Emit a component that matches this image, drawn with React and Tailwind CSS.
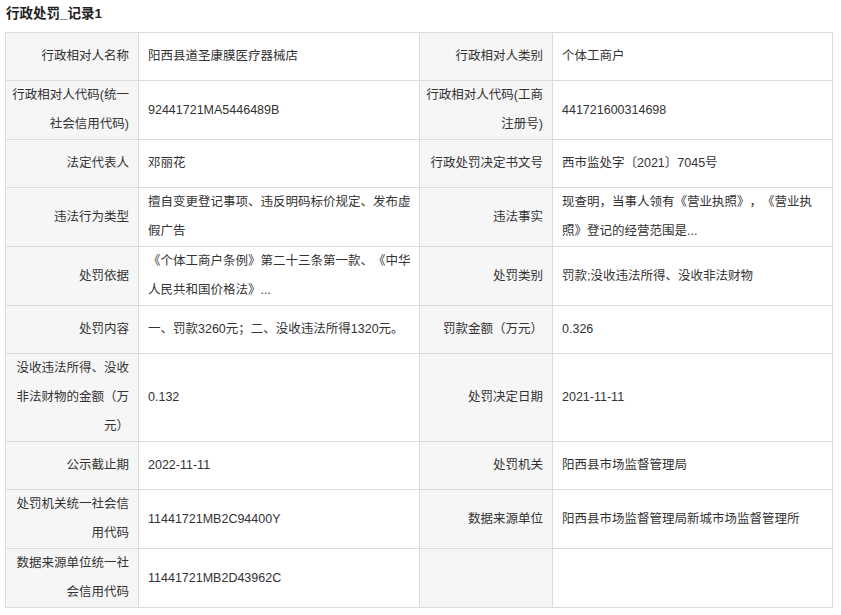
import React from "react";

const rows = [
  [["行政相对人名称"], ["阳西县道圣康膜医疗器械店"], ["行政相对人类别"], ["个体工商户"]],
  [["行政相对人代码(统一", "社会信用代码)"], ["92441721MA5446489B"], ["行政相对人代码(工商", "注册号)"], ["441721600314698"]],
  [["法定代表人"], ["邓丽花"], ["行政处罚决定书文号"], ["西市监处字〔2021〕7045号"]],
  [["违法行为类型"], ["擅自变更登记事项、违反明码标价规定、发布虚", "假广告"], ["违法事实"], ["现查明，当事人领有《营业执照》，《营业执", "照》登记的经营范围是..."]],
  [["处罚依据"], ["《个体工商户条例》第二十三条第一款、《中华", "人民共和国价格法》..."], ["处罚类别"], ["罚款;没收违法所得、没收非法财物"]],
  [["处罚内容"], ["一、罚款3260元；二、没收违法所得1320元。"], ["罚款金额（万元）"], ["0.326"]],
  [["没收违法所得、没收", "非法财物的金额（万", "元）"], ["0.132"], ["处罚决定日期"], ["2021-11-11"]],
  [["公示截止期"], ["2022-11-11"], ["处罚机关"], ["阳西县市场监督管理局"]],
  [["处罚机关统一社会信", "用代码"], ["11441721MB2C94400Y"], ["数据来源单位"], ["阳西县市场监督管理局新城市场监督管理所"]],
  [["数据来源单位统一社", "会信用代码"], ["11441721MB2D43962C"], [], []],
];

function Lines({ lines }) {
  return (
    <div className="whitespace-nowrap">
      {lines.map((l, i) => (
        <div key={i}>{l}</div>
      ))}
    </div>
  );
}

export default function App() {
  return (
    <div className="bg-white w-[841px] min-h-[615px] text-[#333] font-['Liberation_Sans','Noto_Sans_CJK_SC',sans-serif] [text-spacing-trim:space-all]">
      <div className="h-[32px] pl-[6px] pt-[4px] text-[13.5px] leading-[20px] font-bold text-[#222]">
        行政处罚_记录1
      </div>
      <div className="ml-[5px] w-[828px] grid grid-cols-[133px_281px_133px_280px] border-l border-t border-[#dcdcdc] text-[12.5px] leading-[29px]">
        {rows.map((row, ri) =>
          row.map((cell, ci) =>
            ci % 2 === 0 ? (
              <div
                key={ri + "-" + ci}
                className="min-h-[48px] flex items-center justify-end text-right bg-[#f6f6f6] border-r border-b border-[#dcdcdc] pl-[4px] pr-[9px]"
              >
                <Lines lines={cell} />
              </div>
            ) : (
              <div
                key={ri + "-" + ci}
                className="min-h-[48px] flex items-center bg-white border-r border-b border-[#dcdcdc] pl-[9px] pr-[8px]"
              >
                <Lines lines={cell} />
              </div>
            )
          )
        )}
      </div>
    </div>
  );
}
